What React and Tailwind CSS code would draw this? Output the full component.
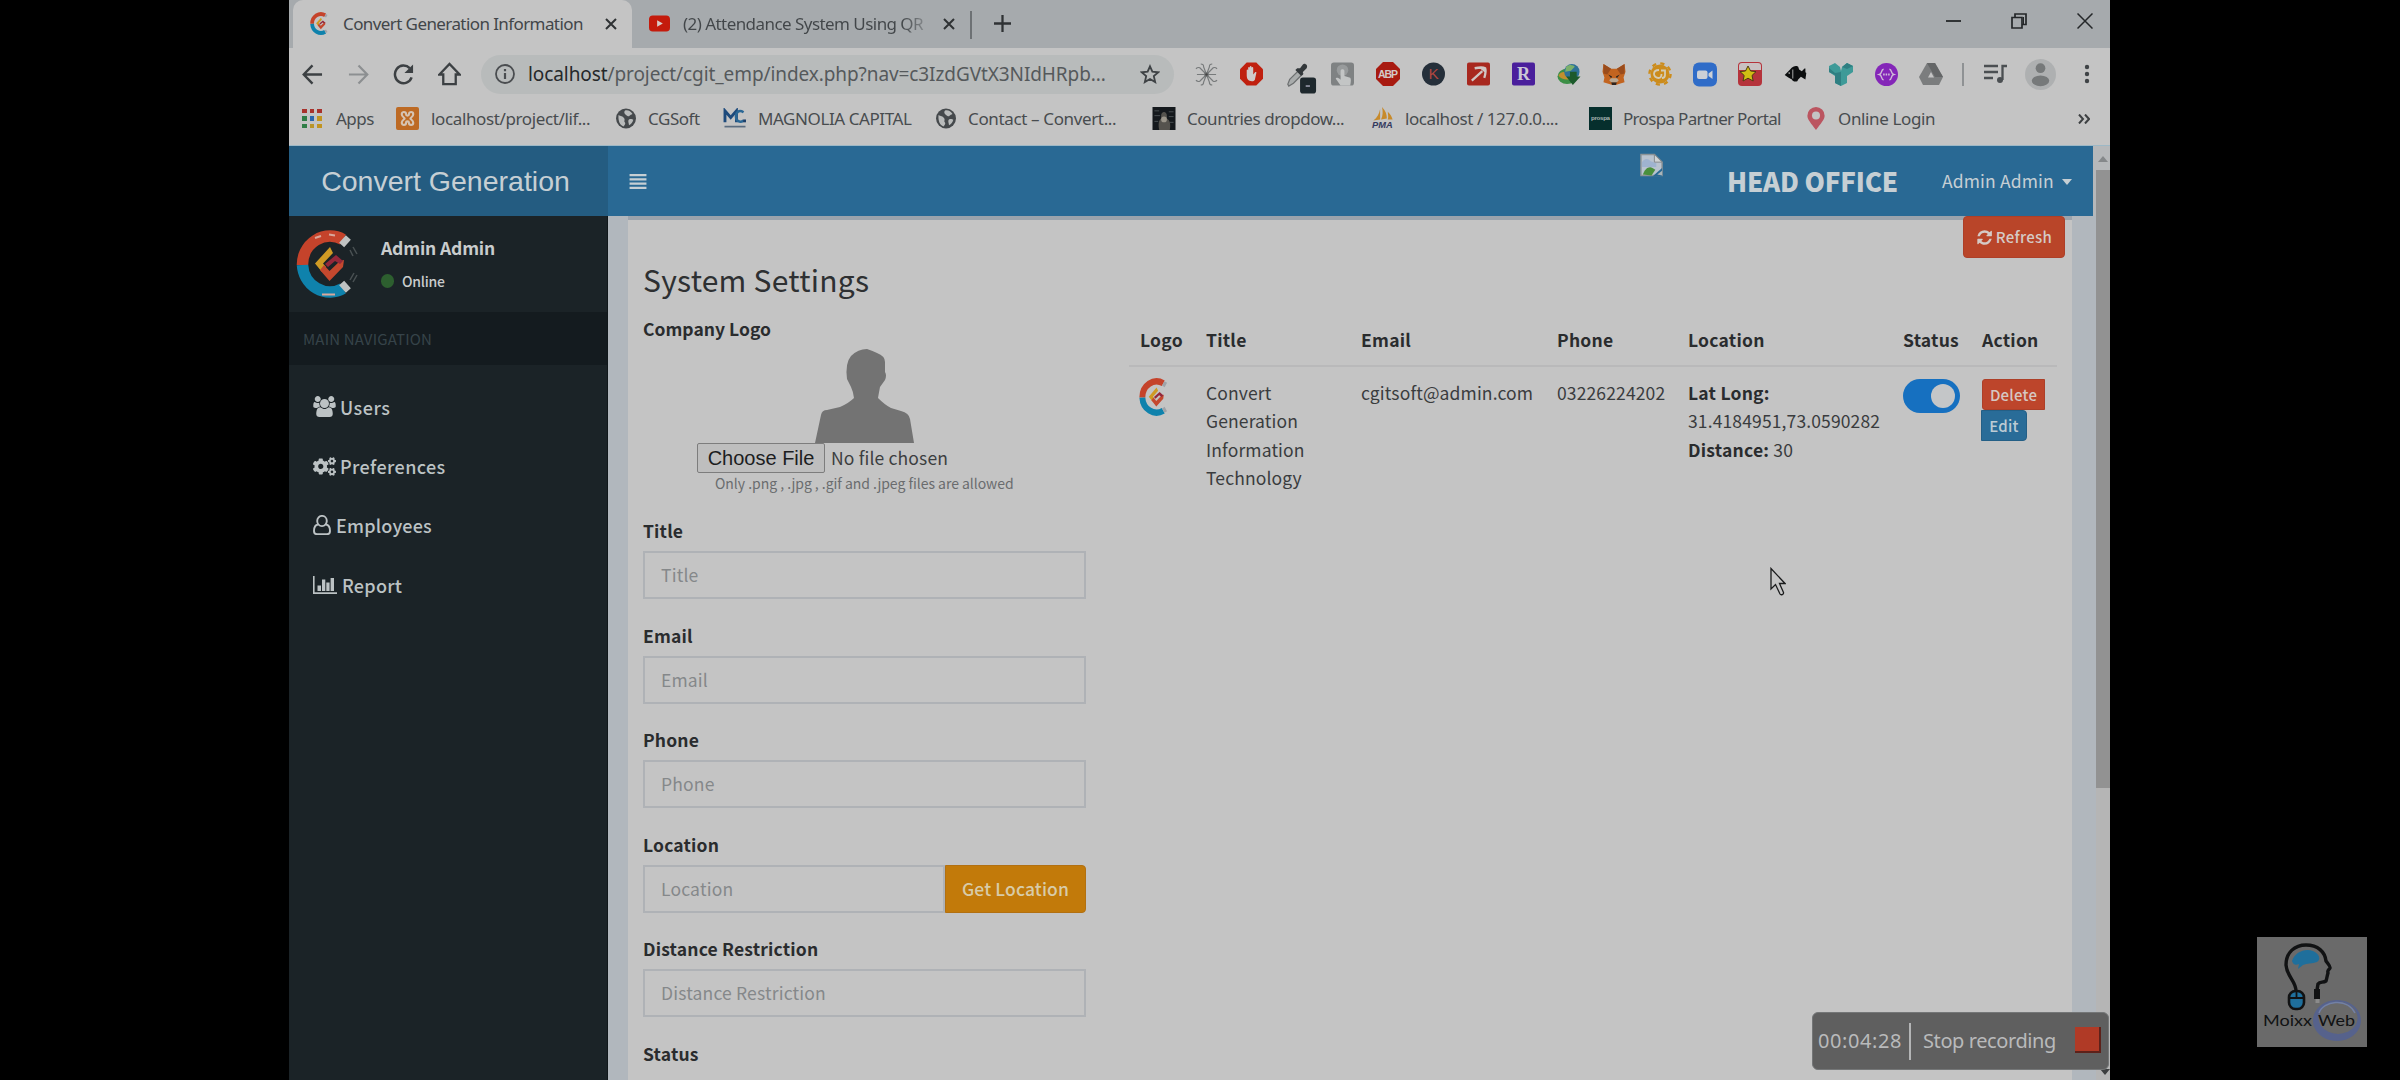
import React from "react";
import { FaCogs } from "react-icons/fa";

const UI = "font-['Noto_Sans',sans-serif]";
const PAGE = "font-['Noto_Sans_CJK_SC',sans-serif]";

function BrandMark({ className, tips }) {
  return (
    <svg viewBox="0 0 62 68" preserveAspectRatio="none" className={className} fill="none">
      <path d="M6.500 35A27.500 28.500 0 0 1 47 9.500" stroke="#c5432b" strokeWidth="11.500" />
      <path d="M6.500 35A27.500 28.500 0 0 0 47 58.500" stroke="#0f82ac" strokeWidth="11.500" />
      {tips ? (
        <>
          <path d="M46.500 9L51.500 13.500M46.500 59L51.500 54.500" stroke="#bfc2c2" strokeWidth="10" />
          <path d="M19 8l6-2M33 4.500l6 1M26 64.500h13" stroke="#d9a79b" strokeWidth="2" />
          <path d="M54 20l3 6M57 17l4 7M54 50l4-7M57 52l4-7" stroke="#4a5153" strokeWidth="1.500" />
        </>
      ) : (
        <path d="M47 9.500l5 3M47 58.500l5-3" stroke="#9fa3a8" strokeWidth="9" />
      )}
      <path d="M34 17L19 33.500l7 8.500 4-5-3-3.500L37 23z" fill="#cf9a24" />
      <path d="M24 40l4-5 5.500 6L44 31l4-1-1 7-13.500 14z" fill="#c4482e" />
      <path d="M29 34l11-9 7 6-3 3-5-3-7 6z" fill="#94283a" />
    </svg>
  );
}

function Globe() {
  return (
    <svg viewBox="0 0 20 20" className="h-[21px] w-[20px]">
      <circle cx="10" cy="10" r="10" fill="#45494c" />
      <path d="M2.500 6.500C5 8 6 7 8 9.500c1.500 2-.5 3 1 4.500 1 1.500-1 3-1.500 4C4 16.500 2 13 2.500 6.500zM9 2c3-.8 6 .8 7.500 3.500-1.500 1.200-2 .5-3 1.800-.8 1.200-2 .2-3.500-.8C8.500 5.500 7.500 3.500 9 2zM13 11c1.500-.8 3.500-.2 4.300.3-.6 2.500-2 4.500-4.300 5.500 0-2-1.500-4.500 0-5.800z" fill="#b9bbbb" />
    </svg>
  );
}

/* ---------- tab strip ---------- */

function CloseX({ className }) {
  return (
    <svg viewBox="0 0 12 12" className={className} stroke="#2f3234" strokeWidth="2">
      <path d="M1 1l10 10M11 1L1 11" />
    </svg>
  );
}

function TabStrip() {
  return (
    <div className={`flex h-[48px] bg-[#a6aaad] text-[17px] leading-[46px] text-[#424649] ${UI}`}>
      <div className="ml-[4px] flex w-[339px] items-center rounded-t-[10px] bg-[#c4c4c4] pb-[1px] pl-[17px]">
        <BrandMark className="h-[23px] w-[20px]" />
        <span className="ml-[13px] w-[252px] whitespace-nowrap tracking-[-0.59px]">
          Convert Generation Information
        </span>
        <CloseX className="ml-[10px] h-[12px] w-[12px]" />
      </div>
      <div className="flex w-[338px] items-center pb-[1px] pl-[17px]">
        <svg viewBox="0 0 22 17" className="h-[17px] w-[21px]">
          <rect width="22" height="17" rx="4" fill="#c41b0c" />
          <path d="M8.500 5l6 3.500-6 3.500z" fill="#d8c9c6" />
        </svg>
        <span className="ml-[13px] w-[243px] whitespace-nowrap bg-linear-to-r from-[#424649] from-90% to-[#8a8e91] bg-clip-text tracking-[-0.55px] text-transparent">
          (2) Attendance System Using QR
        </span>
        <CloseX className="ml-[17px] h-[12px] w-[12px]" />
      </div>
      <div className="mt-[11px] h-[28px] w-[1.500px] bg-[#6d7174]" />
      <svg viewBox="0 0 18 18" className="ml-[22px] mt-[15px] h-[17px] w-[17px]" stroke="#2f3234" strokeWidth="2.400">
        <path d="M9 0v18M0 9h18" />
      </svg>
      <div className="ml-auto mt-[12px] flex h-[17px] items-center">
        <svg viewBox="0 0 15 15" className="h-[15px] w-[15px]" stroke="#242729" strokeWidth="1.800">
          <path d="M0 8h15" />
        </svg>
        <svg viewBox="0 0 16 16" className="ml-[50px] h-[16px] w-[16px]" fill="none" stroke="#242729" strokeWidth="1.700">
          <path d="M1 4.500h10v10.500H1zM4 4V1h11v10.500h-3.500" />
          <path d="M12.500 4v7" strokeWidth="1" />
        </svg>
        <svg viewBox="0 0 16 16" className="ml-[50px] mr-[17px] h-[16px] w-[16px]" stroke="#242729" strokeWidth="1.500">
          <path d="M.5.5l15 15M15.500.5l-15 15" />
        </svg>
      </div>
    </div>
  );
}

/* ---------- toolbar ---------- */

const octagon = "M7 0h10l7 7v10l-7 7H7l-7-7V7z";

const extensions = [
  <svg viewBox="0 0 24 24" className="h-[23px] w-[23px]" fill="none" stroke="#777a7b" strokeWidth="1.200">
    <path d="M12 12L5 5c-2-1-3 0-4 1M12 12l7-7c2-1 3 0 4 1M12 12l-7 7c-2 1-3 0-4-1M12 12l7 7c2 1 3 0 4-1M12 12H2M12 12h10M12 12L9 4c0-2-1-3-3-3M12 12l3-8c0-2 1-3 3-3M12 12l-3 8c0 2-1 3-3 3M12 12l3 8c0 2 1 3 3 3" />
    <circle cx="12" cy="12" r="2" fill="#444" />
  </svg>,
  <svg viewBox="0 0 24 24" className="h-[24px] w-[23px]">
    <path d={octagon} fill="#c0200f" />
    <path d="M7 13V8c0-1 1.500-1 1.500 0V5.500c0-1 1.700-1 1.700 0V4.500c0-1 1.800-1 1.800 0v1c0-1 1.800-1 1.800 0v7l1.700-2c1-1 2-.3 1.500.8L15.500 18c-.8 1.300-1.500 1.500-3 1.500C8.500 19.500 7 17 7 13z" fill="#cfcaca" />
  </svg>,
  <svg viewBox="0 0 34 34" className="-mb-[9px] ml-[8px] h-[33px] w-[32px]">
    <path d="M3 23l2-5L15 8l4 4L9 22l-5 3z" fill="#a9acac" stroke="#6c6f70" strokeWidth="1.300" />
    <path d="M13 6l3 0 3-4c2-2 6 1 4 4l-4 4 0 3-2 1-6-6z" fill="#33383b" />
    <rect x="16" y="16" width="17" height="17" rx="3" fill="#1e282d" />
    <path d="M22 25h4.500" stroke="#aab" strokeWidth="1.500" />
  </svg>,
  <svg viewBox="0 0 24 24" className="h-[24px] w-[23px]">
    <rect width="24" height="24" rx="3" fill="#7f8283" />
    <circle cx="12" cy="8" r="6" fill="#989b9c" />
    <path d="M10 24V9c0-2.500 4-2.500 4 0v5l6 2c1 1 1 4 0 8zM10 24l-5-7c0-1 2-2 5 1z" fill="#c3c5c5" />
  </svg>,
  <svg viewBox="0 0 24 24" className="h-[24px] w-[24px]">
    <path d={octagon} fill="#a81a10" />
    <text x="12" y="16.200" textAnchor="middle" fontFamily="Liberation Sans" fontWeight="700" fontSize="10.500" fill="#d3c8c6" textLength="20">ABP</text>
  </svg>,
  <svg viewBox="0 0 24 24" className="h-[24px] w-[23px]">
    <circle cx="12" cy="12" r="12" fill="#252f3a" />
    <text x="12" y="17.500" textAnchor="middle" fontFamily="Liberation Sans" fontSize="16" fill="#b0463f">K</text>
  </svg>,
  <svg viewBox="0 0 24 24" className="h-[24px] w-[23px]">
    <rect width="24" height="24" rx="2" fill="#a8281f" />
    <path d="M5 19L16 9M8 6c5-1 9-1 11 0 1 3 0 7-1 10M14 5l6 5" stroke="#d0c6c4" strokeWidth="2.400" fill="none" />
  </svg>,
  <svg viewBox="0 0 24 24" className="h-[24px] w-[23px]">
    <rect width="24" height="24" rx="2" fill="#4a1f9c" />
    <text x="12" y="18.500" textAnchor="middle" fontFamily="Liberation Serif" fontWeight="700" fontSize="19" fill="#cbc6d6">R</text>
  </svg>,
  <svg viewBox="0 0 24 24" className="h-[23px] w-[24px]">
    <ellipse cx="10" cy="14" rx="10" ry="8" fill="#3c8f46" />
    <path d="M1 13c3-6 9-4 18 1-3 4-15 5-18-1z" fill="#c08f2e" />
    <circle cx="15" cy="9" r="8" fill="#2e7197" />
    <path d="M9 4c3-3 8-2 9 0l-4 4-6 1z" fill="#7bb06a" />
    <path d="M13 9h7v5h4l-8 9-7-9h4z" fill="#1c5a2b" />
  </svg>,
  <svg viewBox="0 0 24 24" className="h-[23px] w-[24px]">
    <path d="M1 1l8 5h6l8-5 1 8-2 6 1 5-6 2-3 1h-4l-3-1-6-2 1-5-2-6z" fill="#c26420" />
    <path d="M1 1l8 5-4 6-4-1zM23 1l-8 5 4 6 4-1z" fill="#9a4c1c" />
    <path d="M6 12l4 2-1 2zM18 12l-4 2 1 2zM9 20h6l-1 3h-4z" fill="#2c2420" />
    <path d="M7 18l2-2h6l2 2-2 2H9z" fill="#b8a792" />
  </svg>,
  <svg viewBox="0 0 24 24" className="h-[24px] w-[24px]" fill="none">
    <circle cx="12" cy="12" r="9.500" fill="#cc8c1c" />
    <circle cx="12" cy="12" r="10.600" stroke="#cc8c1c" strokeWidth="2.400" strokeDasharray="4.160 4.160" />
    <path d="M11 8c-4 0-5 2-5 4s2 4 4.500 4 3-2 3-4M13 8.500h4V13c0 2-1 3-3 3" stroke="#d4cbb4" strokeWidth="1.800" />
  </svg>,
  <svg viewBox="0 0 24 24" className="h-[25px] w-[24px]">
    <rect width="24" height="24" rx="6" fill="#2f6cc8" />
    <rect x="4" y="8" width="10.500" height="8.500" rx="2" fill="#ccd0d6" />
    <path d="M15.500 11l4-3v8.500l-4-3z" fill="#ccd0d6" />
  </svg>,
  <svg viewBox="0 0 24 24" className="h-[24px] w-[24px]">
    <rect width="24" height="24" rx="4" fill="#b5333b" />
    <path d="M1 8V4q0-3 3-3h16q3 0 3 3v4z" fill="#c9c1c2" />
    <path d="M10 4l2.600 5 5.400.6-4 3.900 1.200 5.500-5.200-2.800L5 19l1.200-5.500L2 9.600 7.500 9z" fill="#d0bd14" stroke="#4d3b12" strokeWidth="1" />
  </svg>,
  <svg viewBox="0 0 24 20" className="h-[18px] w-[25px]" fill="#0c0e0f">
    <path d="M0 11l6-6c4-5 8-4 9-3l1 3 3 2 3-3h1v4l1 1-1 7-5-3-3 3-1 2c-3 1-5 0-6-2l-4-2z" />
    <path d="M9 5v10" stroke="#b8b8b8" strokeWidth="1" />
    <circle cx="5" cy="9" r=".9" fill="#bbb" />
  </svg>,
  <svg viewBox="0 0 24 24" className="h-[24px] w-[24px]">
    <path d="M0 4l6-3 5 4 1 4 1-4 5-4 6 3v6l-6 4v7l-6 3-6-3v-7l-6-4z" fill="#3e9a98" />
    <path d="M12 10v14l-6-3v-8L0 10V6l6 5zM18 1l6 3-6 3-5-2z" fill="#2f7f82" />
  </svg>,
  <svg viewBox="0 0 24 24" className="h-[23px] w-[23px]" fill="none" stroke="#cfbcd8" strokeWidth="1.500">
    <circle cx="12" cy="12" r="12" fill="#8426b8" stroke="none" />
    <path d="M9 6.500C6 6.500 8 11 4.500 12 8 13 6 17.500 9 17.500M15 6.500c3 0 1 4.500 4.500 5.500-3.500 1-1.500 5.500-4.500 5.500" />
    <path d="M8.500 12h7" strokeWidth="2" strokeDasharray="1.600 1" />
  </svg>,
  <svg viewBox="0 0 24 22" className="h-[22px] w-[24px]">
    <path d="M8 0h8l8 14-4 8H4l-4-8z" fill="#7b7d7e" />
    <path d="M8 0h8l8 14h-8z" fill="#646667" />
    <path d="M12 9l3 5.500H9z" fill="#c4c4c4" />
  </svg>,
];

function Toolbar() {
  const nav = "flex w-[45.500px] justify-center";
  return (
    <div className="flex h-[52px] items-center pl-[1px]">
      <div className={nav}>
        <svg viewBox="0 0 22 22" className="h-[21px] w-[21px]" fill="none" stroke="#3c4043" strokeWidth="2.500">
          <path d="M21 11H2M11 1.500L1.800 11l9.200 9.500" />
        </svg>
      </div>
      <div className={nav}>
        <svg viewBox="0 0 22 22" className="h-[21px] w-[21px]" fill="none" stroke="#8c8f91" strokeWidth="2.300">
          <path d="M1 11h19M11 1.500l9.200 9.500-9.200 9.500" />
        </svg>
      </div>
      <div className={nav}>
        <svg viewBox="0 0 22 22" className="h-[22px] w-[21px]" fill="none" stroke="#3c4043" strokeWidth="2.600">
          <path d="M19.500 14.500A9 9.300 0 1 1 17.500 4.800" />
          <path d="M21 1v9h-9z" fill="#3c4043" stroke="none" />
        </svg>
      </div>
      <div className={nav}>
        <svg viewBox="0 0 24 24" className="h-[24px] w-[23px]" fill="none" stroke="#3c4043" strokeWidth="2.400">
          <path d="M1.500 12.500L12 1.500l10.500 11h-4V22.500h-13V12.500z" />
        </svg>
      </div>
      <div className="ml-[9px] flex h-[39px] w-[693px] items-center rounded-full bg-[#b8bbbb] pl-[14px] pr-[14px]">
        <svg viewBox="0 0 20 20" className="h-[20px] w-[20px]" fill="none" stroke="#4a4d50" strokeWidth="1.800">
          <circle cx="10" cy="10" r="9" />
          <path d="M10 9v6M10 5v2.200" strokeWidth="2.200" />
        </svg>
        <span className={`ml-[13px] whitespace-nowrap text-[19px] leading-[39px] tracking-[-0.090px] text-[#55595b] ${UI}`}>
          <span className="text-[#25282a]">localhost</span>/project/cgit_emp/index.php?nav=c3IzdGVtX3NIdHRpb...
        </span>
        <svg viewBox="0 0 22 21" className="ml-auto h-[20px] w-[20px]" fill="none" stroke="#3f4346" strokeWidth="2">
          <path d="M11 2l2.600 6 6.600.6-5 4.300 1.500 6.500L11 16l-5.700 3.400 1.500-6.500-5-4.300L8.400 8z" />
        </svg>
      </div>
      <div className="ml-[10px] flex">
        {extensions.map((icon, i) => (
          <div key={i} className="flex h-[40px] w-[45.300px] items-center justify-center">
            {icon}
          </div>
        ))}
      </div>
      <div className="ml-[8px] h-[23px] w-[1.500px] bg-[#8f9294]" />
      <svg viewBox="0 0 23 20" className="ml-[20px] h-[20px] w-[23px]" fill="none" stroke="#4b4f52" strokeWidth="2.300">
        <path d="M0 2h14M0 8h14M0 14h9M18.500 16V2H23" />
        <circle cx="16" cy="16" r="3" fill="#4b4f52" stroke="none" />
      </svg>
      <svg viewBox="0 0 32 32" className="ml-[18px] h-[31px] w-[31px]">
        <circle cx="16" cy="16" r="16" fill="#aeb0b1" />
        <circle cx="16" cy="9.500" r="5" fill="#76797a" />
        <ellipse cx="16" cy="22.500" rx="9" ry="5.500" fill="#76797a" />
      </svg>
      <svg viewBox="0 0 6 20" className="ml-[28px] h-[20px] w-[6px]" fill="#3f4346">
        <circle cx="3" cy="3" r="2.200" />
        <circle cx="3" cy="10" r="2.200" />
        <circle cx="3" cy="17" r="2.200" />
      </svg>
    </div>
  );
}

/* ---------- bookmarks ---------- */

function Bookmark({ icon, label, className, iconClass, track }) {
  return (
    <div className={`flex shrink-0 items-center ${className}`}>
      <div className={`flex shrink-0 items-center ${iconClass}`}>{icon}</div>
      <span className={`whitespace-nowrap ${track}`}>{label}</span>
    </div>
  );
}

const appDots = ["#a8322c", "#a8322c", "#a8322c", "#2f7d46", "#2a66ae", "#c19421", "#2f7d46", "#b9952a", "#c19421"];

function Bookmarks() {
  return (
    <div className={`flex h-[45.500px] border-b border-[#9db8c6] bg-[#c4c4c4] pb-[7.500px] pl-[13px] text-[17px] leading-[37px] text-[#484c4f] ${UI}`}>
      <Bookmark
        className="w-[94px]" iconClass="w-[34px]" track="tracking-[-0.500px]" label="Apps"
        icon={
          <div className="grid grid-cols-3 gap-[3px]">
            {appDots.map((c, i) => <i key={i} className="block h-[4.500px] w-[4.500px]" style={{ backgroundColor: c }} />)}
          </div>
        }
      />
      <Bookmark
        className="w-[220px]" iconClass="w-[35px]" track="tracking-[-0.370px]" label="localhost/project/lif..."
        icon={
          <svg viewBox="0 0 24 24" className="h-[23px] w-[23px]" fill="none">
            <rect width="24" height="24" rx="2" fill="#bd6a24" />
            <path d="M6 7.500c0-3 4.500-3 4.500 0 0 2 3 2 3 0 0-3 4.500-3 4.500 0S15 11 15 12s3 1.500 3 4.500-4.500 3-4.500 0c0-2-3-2-3 0 0 3-4.500 3-4.500 0S9 13 9 12 6 10.500 6 7.500z" stroke="#d6c4b2" strokeWidth="2.200" />
          </svg>
        }
      />
      <Bookmark className="w-[107px]" iconClass="w-[32px]" track="tracking-[-0.450px]" label="CGSoft" icon={<Globe />} />
      <Bookmark
        className="w-[213px]" iconClass="w-[35px]" track="tracking-[-0.420px]" label="MAGNOLIA CAPITAL"
        icon={
          <svg viewBox="0 0 24 22" className="h-[21px] w-[24px]" fill="none">
            <path d="M1.500 15V3l6 7 6-7v12" stroke="#1d4a7c" strokeWidth="3" />
            <path d="M21 4.500c-5-3-8 0-8 4.500s4 7 8 4" stroke="#2a6795" strokeWidth="2.600" />
            <rect x="20.500" y="12" width="3" height="3" fill="#1d3f6a" />
            <path d="M1 19.500h22" stroke="#5b6d80" strokeWidth="1.800" />
          </svg>
        }
      />
      <Bookmark className="w-[216px]" iconClass="w-[32px]" track="tracking-[-0.360px]" label="Contact – Convert..." icon={<Globe />} />
      <Bookmark
        className="w-[219px]" iconClass="w-[35px]" track="tracking-[-0.460px]" label="Countries dropdow..."
        icon={
          <svg viewBox="0 0 24 24" className="h-[23px] w-[24px]">
            <rect width="24" height="24" fill="#15191d" />
            <path d="M2 4h5M2 9h6M17 5h5M17 10h5M2 15h4M18 16h4" stroke="#4a5054" />
            <path d="M9 9c0-5 6-5 6 0v3c4 2 4 8 3 12H7c-1-5-1-10 2-12z" fill="#55534e" />
            <circle cx="12" cy="13" r="3" fill="#9a958a" />
          </svg>
        }
      />
      <Bookmark
        className="w-[218px]" iconClass="w-[34px]" track="tracking-[-0.430px]" label="localhost / 127.0.0...."
        icon={
          <svg viewBox="0 0 24 26" className="h-[25px] w-[24px]">
            <path d="M2 15C6 12 8 8 9 3v11zM10 14c2-4 2-8 1-13 4 4 5 8 5 12zM17 14c1-3 0-5 0-8 3 3 4 5 5 8z" fill="#c78a2b" />
            <text x="0.500" y="23" fontFamily="Liberation Sans" fontStyle="italic" fontWeight="700" fontSize="10" textLength="21.500" lengthAdjust="spacingAndGlyphs" fill="#33395e">PMA</text>
          </svg>
        }
      />
      <Bookmark
        className="w-[218px]" iconClass="w-[34px]" track="tracking-[-0.680px]" label="Prospa Partner Portal"
        icon={
          <svg viewBox="0 0 24 24" className="h-[23px] w-[23px]">
            <rect width="24" height="24" fill="#062f2d" />
            <text x="2" y="14" fontFamily="Liberation Sans" fontWeight="700" fontSize="6.500" textLength="20" fill="#a9b5b3">prospa</text>
          </svg>
        }
      />
      <Bookmark
        className="w-[271px]" iconClass="w-[31px]" track="tracking-[-0.370px]" label="Online Login"
        icon={
          <svg viewBox="0 0 18 24" className="h-[23px] w-[18px]">
            <path d="M9 0a9 9 0 0 1 9 9c0 4-4 8-9 15C4 17 0 13 0 9a9 9 0 0 1 9-9z" fill="#bb5560" />
            <circle cx="9" cy="8.800" r="4.200" fill="#c4c4c4" />
          </svg>
        }
      />
      <svg viewBox="0 0 12 10" className="mt-[14px] h-[10px] w-[12px]" fill="none" stroke="#3d4042" strokeWidth="2">
        <path d="M1 .5L5 5 1 9.500M7 .5L11 5 7 9.500" />
      </svg>
    </div>
  );
}

/* ---------- page ---------- */

function PageHeader() {
  return (
    <div className="flex h-[70.500px] text-[#c6cfd4]">
      <div className="w-[319px] bg-[#245c81] pr-[6px] text-center font-['Liberation_Sans',sans-serif] text-[28.500px] leading-[70px]">
        Convert Generation
      </div>
      <div className="flex w-[1485px] bg-[#296994]">
        <svg viewBox="0 0 18 16" className="ml-[21px] mt-[28px] h-[15px] w-[18px]" stroke="#c6cfd4" strokeWidth="2.500">
          <path d="M0 1.250h18M0 5.700h18M0 10.300h18M0 14.750h18" />
        </svg>
        <svg viewBox="0 0 24 24" className="ml-[993px] mt-[7px] h-[24px] w-[23px]">
          <path d="M1 1h14l8 8v14H1z" fill="#b9c3cf" stroke="#8d9497" strokeWidth="1.500" />
          <path d="M2 9c3-4 6-4 9-1l6 2v4H2z" fill="#9fb3cf" />
          <path d="M3 22c2-6 6-9 10-7l3 2-4 6z" fill="#4a8f3c" />
          <path d="M15 1v8h8z" fill="#d2d4d5" stroke="#83888b" strokeWidth="1" />
          <path d="M13 24l10-9v9z" fill="#296994" />
          <path d="M18 22l5-4v5z" fill="#a9b5ba" />
        </svg>
        <div className={`ml-[64px] w-[215px] whitespace-nowrap text-[26px] font-black leading-[69px] tracking-[-0.200px] ${PAGE}`}>
          HEAD OFFICE
        </div>
        <div className={`flex items-center whitespace-nowrap text-[17.500px] leading-[71px] tracking-[0.140px] ${PAGE}`}>
          Admin Admin
          <i className="ml-[8px] mt-[3px] block border-x-[5.500px] border-t-[6px] border-x-transparent border-t-[#c6cfd4]" />
        </div>
      </div>
      <div className="flex flex-1 justify-end bg-[#b6b8ba]">
        <div className="flex w-[14px] flex-col items-center">
          <i className="mt-[10px] block border-x-[5px] border-b-[6px] border-x-transparent border-b-[#85888a]" />
          <div className="mt-auto h-[46px] w-full bg-[#929292]" />
        </div>
      </div>
    </div>
  );
}

const UsersIcon = (
  <svg viewBox="0 0 1920 1792" className="h-[21px] w-[23px]" fill="currentColor">
    <path d="M593 896q-162 5-265 128h-134q-82 0-138-40.500t-56-118.500q0-353 124-353 6 0 43.500 21t97.500 42.500 119 21.500q67 0 133-23-5 37-5 66 0 139 81 256zM1664 1533q0 120-73 189.500t-194 69.500h-874q-121 0-194-69.500t-73-189.500q0-53 3.500-103.500t14-109 26.500-108.500 43-97.500 62-81 85.500-53.500 111.500-20q10 0 43 21.500t73 48 107 48 135 21.500 135-21.500 107-48 73-48 43-21.500q61 0 111.500 20t85.500 53.500 62 81 43 97.500 26.500 108.500 14 109 3.500 103.500zM640 256q0 106-75 181t-181 75-181-75-75-181 75-181 181-75 181 75 75 181zM1344 640q0 159-112.500 271.500t-271.500 112.500-271.500-112.500-112.500-271.500 112.500-271.500 271.500-112.500 271.500 112.500 112.500 271.500zM1920 865q0 78-56 118.500t-138 40.500h-134q-103-123-265-128 81-117 81-256 0-29-5-66 66 23 133 23 59 0 119-21.500t97.500-42.500 43.500-21q124 0 124 353zM1792 256q0 106-75 181t-181 75-181-75-75-181 75-181 181-75 181 75 75 181z" />
  </svg>
);

const EmployeeIcon = (
  <svg viewBox="0 0 18 20" className="h-[20px] w-[18px]" fill="none" stroke="currentColor" strokeWidth="1.900">
    <path d="M5 9.500C2 10 1 13 1 16c0 2 1 3.200 3 3.200h10c2 0 3-1.200 3-3.200 0-3-1-6-4-6.500" />
    <ellipse cx="9" cy="6" rx="4.800" ry="5.100" />
  </svg>
);

const ReportIcon = (
  <svg viewBox="0 0 24 18" className="h-[18px] w-[24px]" fill="currentColor">
    <path d="M0 0h1.600v16.300H24V18H0zM4.500 9.500H8V15H4.500zM9 3.500h3.300V15H9zM13.300 6.500h3.300V15h-3.300zM17.600 2H21v13h-3.400z" />
  </svg>
);

const navItems = [
  { label: "Users", icon: UsersIcon, track: "tracking-[0.500px]", gap: "gap-[4px]" },
  { label: "Preferences", icon: <FaCogs className="h-[21px] w-[23px]" />, track: "tracking-[0.380px]", gap: "gap-[4px]" },
  { label: "Employees", icon: EmployeeIcon, track: "tracking-[0.200px]", gap: "gap-[5px]" },
  { label: "Report", icon: ReportIcon, track: "tracking-[0.250px]", gap: "gap-[5px]" },
];

function Sidebar() {
  return (
    <div className={`flex w-[319px] shrink-0 flex-col border-r border-[#10171a] bg-[#1b2327] ${PAGE}`}>
      <div className="flex h-[96px] pl-[7px]">
        <BrandMark tips className="mt-[14px] h-[68px] w-[62px]" />
        <div className="ml-[23px] text-[#c9cccd]">
          <div className="mt-[17px] whitespace-nowrap text-[17.500px] font-bold leading-[30px] tracking-[-0.150px]">
            Admin Admin
          </div>
          <div className="mt-[7px] flex items-center gap-[8px] text-[14px] font-medium leading-[22px] tracking-[-0.250px]">
            <i className="block h-[14px] w-[13px] rounded-full bg-[#2d5f2f]" />
            Online
          </div>
        </div>
      </div>
      <div className="h-[53px] bg-[#141b1f] pl-[14px] text-[15px] leading-[53px] tracking-[0.170px] text-[#364349]">
        MAIN NAVIGATION
      </div>
      <div className="mt-[12px] flex flex-col pl-[24px] text-[18px] font-medium text-[#bcc2c4]">
        {navItems.map((n) => (
          <div key={n.label} className={`flex h-[59.400px] items-center ${n.gap}`}>
            {n.icon}
            <span className={`leading-[58px] ${n.track}`}>{n.label}</span>
          </div>
        ))}
      </div>
    </div>
  );
}

function Field({ label, children }) {
  return (
    <div className="h-[104.600px]">
      <div className="h-[40px] text-[17.500px] font-bold leading-[39px] tracking-[0.180px] text-[#2a2c2e]">{label}</div>
      <div className="flex h-[48px] text-[17.500px] leading-[45px] tracking-[0.170px]">{children}</div>
    </div>
  );
}

function Input({ placeholder }) {
  return (
    <div className="flex-1 border-2 border-[#afb2b6] pl-[16px] leading-[44px] text-[#85888a]">{placeholder}</div>
  );
}

function SettingsForm() {
  return (
    <div className="w-[443px] shrink-0">
      <div className="h-[45px] text-[17.500px] font-bold leading-[49px] tracking-[0.020px] text-[#2a2c2e]">Company Logo</div>
      <svg viewBox="0 0 99 94" className="ml-[172px] h-[94px] w-[99px]">
        <path d="M0 94L6 66Q7 61 12 61L25 58Q34 54 39 49Q38 42 36 38L32 30Q30 14 36 7Q43 0 52 0Q58 2 62 4Q70 7 70 13L70 23Q72 26 70 31L65 38Q64 43 63 49Q70 56 76 59L86 62Q94 64 95 70L99 94Z" fill="#737373" />
      </svg>
      <div className="ml-[54px] flex h-[30px] items-center">
        <div className="h-[30px] w-[128px] rounded-[2px] border-[1.500px] border-[#7d7d7d] bg-[#bebebe] text-center font-['Liberation_Sans',sans-serif] text-[20px] leading-[28px] text-[#1c1d1e]">
          Choose File
        </div>
        <span className="ml-[6px] text-[17.500px] leading-[30px] tracking-[0.150px] text-[#3c3e40]">No file chosen</span>
      </div>
      <div className="ml-[72px] h-[22px] whitespace-nowrap text-[14px] leading-[20px] tracking-[-0.030px] text-[#6a6c6e]">
        Only .png , .jpg , .gif and .jpeg files are allowed
      </div>
      <div className="mt-[16px]">
        <Field label="Title"><Input placeholder="Title" /></Field>
        <Field label="Email"><Input placeholder="Email" /></Field>
        <Field label="Phone"><Input placeholder="Phone" /></Field>
        <Field label="Location">
          <Input placeholder="Location" />
          <div className="w-[141px] rounded-r-[4px] border border-[#b27011] bg-[#c27a0a] text-center font-medium tracking-[0.150px] text-[#d8cba8]">
            Get Location
          </div>
        </Field>
        <Field label="Distance Restriction"><Input placeholder="Distance Restriction" /></Field>
        <Field label="Status" />
      </div>
    </div>
  );
}

const tableCols = "grid grid-cols-[66px_155px_196px_131px_215px_79px_86px]";

function SettingsTable() {
  return (
    <div className="ml-[43px] w-[928px] shrink-0 text-[17.500px] text-[#3a3c3e]">
      <div className={`${tableCols} h-[63px] border-b-2 border-[#b9b9ba] pl-[11px] font-bold leading-[71px] tracking-[0.250px] text-[#2a2c2e]`}>
        <div>Logo</div>
        <div>Title</div>
        <div>Email</div>
        <div>Phone</div>
        <div>Location</div>
        <div>Status</div>
        <div>Action</div>
      </div>
      <div className={`${tableCols} pl-[11px] pt-[12px] leading-[28.300px] tracking-[0.130px]`}>
        <BrandMark className="-ml-px -mt-px h-[38px] w-[32px]" />
        <div>Convert<br />Generation<br />Information<br />Technology</div>
        <div>cgitsoft@admin.com</div>
        <div>03226224202</div>
        <div>
          <b className="tracking-[0.230px] text-[#2a2c2e]">Lat Long:</b><br />
          31.4184951,73.0590282<br />
          <b className="tracking-[0.230px] text-[#2a2c2e]">Distance:</b> 30
        </div>
        <div className="flex h-[34px] w-[57px] items-center justify-end rounded-full bg-[#1670c0] pr-[5px]">
          <i className="block h-[24px] w-[24px] rounded-full bg-[#c4c6c8]" />
        </div>
        <div className="flex flex-col text-center text-[15px] font-medium tracking-[0.200px]">
          <div className="h-[31px] w-[63px] rounded-l-[3px] border border-[#ad3f28] bg-[#bd452b] leading-[29px] text-[#d6c7c2]">Delete</div>
          <div className="-ml-px h-[31px] w-[46px] rounded-r-[4px] border border-[#245f86] bg-[#296c98] leading-[29px] text-[#bdcbd4]">Edit</div>
        </div>
      </div>
    </div>
  );
}

function Content() {
  return (
    <div className={`flex flex-1 overflow-hidden bg-[#b1b7bd] pl-[20px] ${PAGE}`}>
      <div className="w-[1444px] shrink-0 border-t-[4px] border-[#9ba3ac] bg-[#c4c4c4]">
        <div className="-mt-[4px] ml-auto mr-[7px] flex h-[42px] w-[102px] items-center justify-center gap-[4px] rounded-[4px] border border-[#ad3f28] bg-[#b94529] text-[15px] font-medium leading-[40px] tracking-[0.300px] text-[#d5cac6]">
          <svg viewBox="0 0 1664 1792" className="h-[17px] w-[16px]" fill="currentColor">
            <path d="M1639 1056q0 5-1 7-64 268-268 434.500t-478 166.500q-146 0-282.500-55t-243.500-157l-129 129q-19 19-45 19t-45-19-19-45v-448q0-26 19-45t45-19h448q26 0 45 19t19 45-19 45l-137 137q71 66 161 102t187 36q134 0 250-65t186-179q11-17 53-117 8-23 30-23h192q13 0 22.500 9.500t9.500 22.500zM1664 256v448q0 26-19 45t-45 19h-448q-26 0-45-19t-19-45 19-45l138-138q-148-137-349-137-134 0-250 65t-186 179q-11 17-53 117-8 23-30 23h-199q-13 0-22.500-9.500t-9.500-22.500v-7q65-268 270-434.500t480-166.500q146 0 284 55.500t245 156.500l130-129q19-19 45-19t45 19 19 45z" />
          </svg>
          Refresh
        </div>
        <div className="h-[46px] pl-[15px] text-[30px] leading-[43px] tracking-[0.250px] text-[#2e3032]">System Settings</div>
        <div className="flex pl-[15px]">
          <SettingsForm />
          <SettingsTable />
        </div>
      </div>
      <div className="ml-auto flex w-[14px] shrink-0 flex-col bg-[#b5b5b5]">
        <div className="h-[572px] shrink-0 bg-[#929292]" />
        <i className="ml-[4px] mt-[281px] block h-0 w-0 border-x-[5px] border-t-[6px] border-x-transparent border-t-[#3c3e3f]" />
      </div>
    </div>
  );
}

/* ---------- overlays ---------- */

function RecorderBar() {
  return (
    <div className={`absolute left-[1812px] top-[1012px] flex h-[58px] w-[297px] items-center rounded-[6px] border border-[#747677] bg-[#5f5f5f] pl-[5px] text-[20px] leading-[56px] text-[#b9babb] ${UI}`}>
      <span className="w-[91px] tracking-[0.580px]">00:04:28</span>
      <div className="h-[37px] w-[2px] bg-[#b4b5b6]" />
      <span className="ml-[12px] w-[152px] whitespace-nowrap tracking-[-0.410px]">Stop recording</span>
      <div className="-mt-[2px] h-[26px] w-[26px] border-b-2 border-r-2 border-[#5d211a] bg-[#b03a26]" />
    </div>
  );
}

function Cursor() {
  return (
    <svg viewBox="0 0 16 29" className="absolute left-[1770px] top-[567px] h-[29px] w-[16px]">
      <path d="M1 1.500V22l4.500-4.500L10 27c1 1.500 4 .5 3.500-1.500L9.500 16.500H15z" fill="#c6c6c6" stroke="#1b1c1d" strokeWidth="1.300" />
    </svg>
  );
}

function Watermark() {
  return (
    <svg viewBox="0 0 110 110" className="ml-[147px] mt-[937px] h-[110px] w-[110px]" fill="none">
      <rect width="110" height="110" fill="#6a6a6a" />
      <path d="M39 54C39 44 30 40 29 28C29 15 38 8 49 8C61 8 68 15 69 24C71 27 74 30 73 31C72 33 70 33 71 36C70 39 70 41 69 44C66 46 63 44 61 47L60 53" stroke="#111213" strokeWidth="3.400" />
      <path d="M35 24C38 15 48 11 56 14C63 17 64 23 60 25C55 27 50 26 46 28L41 32L42 27C38 29 36 27 35 24Z" fill="#1f6f9c" />
      <path d="M57 52h6v10h-6z" fill="#111213" />
      <path d="M58.500 62h4v4h-4z" fill="#8b8b8b" />
      <rect x="32" y="54" width="15" height="18" rx="6.500" fill="#1f6f9c" stroke="#111213" strokeWidth="2.600" />
      <path d="M32 61h15M39.500 54v7" stroke="#111213" strokeWidth="1.800" />
      <path fillRule="evenodd" d="M80 63a24 20.500 0 1 1-.1 0zM81 65a19.500 16 0 1 0 .1 0z" fill="#56628c" />
      <path d="M62 76c4-12 28-16 36 0" stroke="#7280a6" strokeWidth="1.500" />
      <text x="6" y="89" fontFamily="Lato" fontSize="16" textLength="49" lengthAdjust="spacingAndGlyphs" fill="#111213">Moixx</text>
      <text x="61" y="89" fontFamily="Lato" fontSize="16" textLength="37" lengthAdjust="spacingAndGlyphs" fill="#111213">Web</text>
    </svg>
  );
}

export default function App() {
  return (
    <div className="relative flex h-[1080px] w-[2400px] overflow-hidden bg-black pl-[289px]">
      <div className="flex h-full w-[1821px] flex-col overflow-hidden bg-[#c4c4c4]">
        <TabStrip />
        <Toolbar />
        <Bookmarks />
        <PageHeader />
        <div className="flex min-h-0 flex-1">
          <Sidebar />
          <Content />
        </div>
      </div>
      <Watermark />
      <Cursor />
      <RecorderBar />
    </div>
  );
}
